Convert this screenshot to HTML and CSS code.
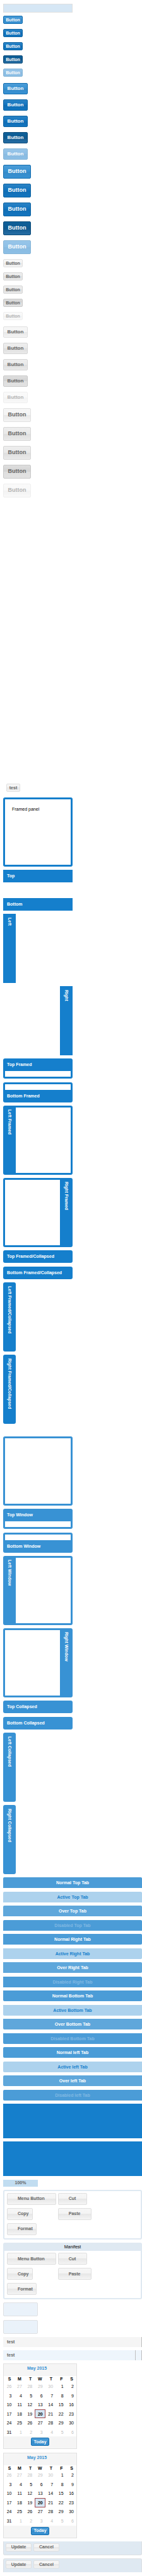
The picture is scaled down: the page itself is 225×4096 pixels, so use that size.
FILE: index.html
```html
<!DOCTYPE html>
<html lang="en">
<head>
<meta charset="utf-8">
<title>Theme components</title>
<link rel="stylesheet" href="styles.css">
</head>
<body>
<main class="page">
  <div class="toolbar"></div>

  <section class="buttons">
    <div class="button-group small">
      <button class="btn primary">Button</button>
      <button class="btn primary over">Button</button>
      <button class="btn primary over">Button</button>
      <button class="btn primary pressed">Button</button>
      <button class="btn primary" disabled>Button</button>
    </div>
    <div class="button-group medium">
      <button class="btn primary">Button</button>
      <button class="btn primary over">Button</button>
      <button class="btn primary over">Button</button>
      <button class="btn primary pressed">Button</button>
      <button class="btn primary" disabled>Button</button>
    </div>
    <div class="button-group large">
      <button class="btn primary">Button</button>
      <button class="btn primary over">Button</button>
      <button class="btn primary over">Button</button>
      <button class="btn primary pressed">Button</button>
      <button class="btn primary" disabled>Button</button>
    </div>
    <div class="button-group small">
      <button class="btn">Button</button>
      <button class="btn over">Button</button>
      <button class="btn over">Button</button>
      <button class="btn pressed">Button</button>
      <button class="btn" disabled>Button</button>
    </div>
    <div class="button-group medium">
      <button class="btn">Button</button>
      <button class="btn over">Button</button>
      <button class="btn over">Button</button>
      <button class="btn pressed">Button</button>
      <button class="btn" disabled>Button</button>
    </div>
    <div class="button-group large">
      <button class="btn">Button</button>
      <button class="btn over">Button</button>
      <button class="btn over">Button</button>
      <button class="btn pressed">Button</button>
      <button class="btn" disabled>Button</button>
    </div>
  </section>

  <div class="test-row"><button class="btn test-btn">test</button></div>

  <section class="panels">
    <div class="panel framed"><div class="body padded">Framed panel</div></div>
    <div class="panel top open"><h2 class="head">Top</h2></div>
    <div class="panel bottom"><h2 class="head">Bottom</h2></div>
    <div class="panel side left"><h2 class="head">Left</h2></div>
    <div class="panel side right"><h2 class="head">Right</h2></div>
    <div class="panel framed top"><h2 class="head">Top Framed</h2><div class="body"></div></div>
    <div class="panel framed bottom"><div class="body"></div><h2 class="head">Bottom Framed</h2></div>
    <div class="panel framed side left"><h2 class="head">Left Framed</h2><div class="body"></div></div>
    <div class="panel framed side right"><div class="body"></div><h2 class="head">Right Framed</h2></div>
    <div class="panel collapsed"><h2 class="head">Top Framed/Collapsed</h2></div>
    <div class="panel collapsed"><h2 class="head">Bottom Framed/Collapsed</h2></div>
    <div class="panel collapsed side left"><h2 class="head">Left Framed/Collapsed</h2></div>
    <div class="panel collapsed side left"><h2 class="head">Right Framed/Collapsed</h2></div>
  </section>

  <section class="panels windows">
    <div class="panel framed"><div class="body"></div></div>
    <div class="panel framed top"><h2 class="head">Top Window</h2><div class="body"></div></div>
    <div class="panel framed bottom"><div class="body"></div><h2 class="head">Bottom Window</h2></div>
    <div class="panel framed side left"><h2 class="head">Left Window</h2><div class="body"></div></div>
    <div class="panel framed side right"><div class="body"></div><h2 class="head">Right Window</h2></div>
    <div class="panel collapsed"><h2 class="head">Top Collapsed</h2></div>
    <div class="panel collapsed"><h2 class="head">Bottom Collapsed</h2></div>
    <div class="panel collapsed side left"><h2 class="head">Left Collapsed</h2></div>
    <div class="panel collapsed side left"><h2 class="head">Right Collapsed</h2></div>
  </section>

  <section class="tabs">
    <button class="tab t">Normal Top Tab</button>
    <button class="tab t active">Active Top Tab</button>
    <button class="tab t hover">Over Top Tab</button>
    <button class="tab t" disabled>Disabled Top Tab</button>
    <button class="tab r">Normal Right Tab</button>
    <button class="tab r active">Active Right Tab</button>
    <button class="tab r hover">Over Right Tab</button>
    <button class="tab r" disabled>Disabled Right Tab</button>
    <button class="tab b">Normal Bottom Tab</button>
    <button class="tab b active">Active Bottom Tab</button>
    <button class="tab b hover">Over Bottom Tab</button>
    <button class="tab b" disabled>Disabled Bottom Tab</button>
    <button class="tab l">Normal left Tab</button>
    <button class="tab l active">Active left Tab</button>
    <button class="tab l hover">Over left Tab</button>
    <button class="tab l" disabled>Disabled left Tab</button>
  </section>

  <section class="widgets">
    <div class="block"></div>
    <div class="block"></div>
    <div class="progress">100%</div>

    <div class="menu-group">
      <div class="menu-items">
        <button class="btn menu split">Menu Button</button>
        <button class="btn menu split">Cut</button>
        <button class="btn menu">Copy</button>
        <button class="btn menu split">Paste</button>
        <button class="btn menu">Format</button>
      </div>
    </div>
    <div class="menu-group titled">
      <h2 class="menu-title">Manifest</h2>
      <div class="menu-items">
        <button class="btn menu split">Menu Button</button>
        <button class="btn menu split">Cut</button>
        <button class="btn menu">Copy</button>
        <button class="btn menu split">Paste</button>
        <button class="btn menu">Format</button>
      </div>
    </div>

    <div class="tip"></div>
    <div class="tip"></div>
    <div class="column-head">test</div>
    <div class="column-head sorted"><span>test</span><span class="trigger"></span></div>

    <div class="calendar">
      <h2 class="month">May 2015</h2>
      <table class="days">
        <thead><tr><th>S</th><th>M</th><th>T</th><th>W</th><th>T</th><th>F</th><th>S</th></tr></thead>
        <tbody>
          <tr><td class="out">26</td><td class="out">27</td><td class="out">28</td><td class="out">29</td><td class="out">30</td><td>1</td><td>2</td></tr>
          <tr><td>3</td><td>4</td><td>5</td><td>6</td><td>7</td><td>8</td><td>9</td></tr>
          <tr><td>10</td><td>11</td><td>12</td><td>13</td><td>14</td><td>15</td><td>16</td></tr>
          <tr><td>17</td><td>18</td><td>19</td><td class="selected">20</td><td>21</td><td>22</td><td>23</td></tr>
          <tr><td>24</td><td>25</td><td>26</td><td>27</td><td>28</td><td>29</td><td>30</td></tr>
          <tr><td>31</td><td class="out">1</td><td class="out">2</td><td class="out">3</td><td class="out">4</td><td class="out">5</td><td class="out">6</td></tr>
        </tbody>
      </table>
      <div class="cal-foot"><button class="btn primary">Today</button></div>
    </div>
    <div class="calendar">
      <h2 class="month">May 2015</h2>
      <table class="days">
        <thead><tr><th>S</th><th>M</th><th>T</th><th>W</th><th>T</th><th>F</th><th>S</th></tr></thead>
        <tbody>
          <tr><td class="out">26</td><td class="out">27</td><td class="out">28</td><td class="out">29</td><td class="out">30</td><td>1</td><td>2</td></tr>
          <tr><td>3</td><td>4</td><td>5</td><td>6</td><td>7</td><td>8</td><td>9</td></tr>
          <tr><td>10</td><td>11</td><td>12</td><td>13</td><td>14</td><td>15</td><td>16</td></tr>
          <tr><td>17</td><td>18</td><td>19</td><td class="selected">20</td><td>21</td><td>22</td><td>23</td></tr>
          <tr><td>24</td><td>25</td><td>26</td><td>27</td><td>28</td><td>29</td><td>30</td></tr>
          <tr><td>31</td><td class="out">1</td><td class="out">2</td><td class="out">3</td><td class="out">4</td><td class="out">5</td><td class="out">6</td></tr>
        </tbody>
      </table>
      <div class="cal-foot"><button class="btn primary">Today</button></div>
    </div>

    <div class="editor-bar below"><button class="btn">Update</button><button class="btn">Cancel</button></div>
    <div class="editor-bar above"><button class="btn">Update</button><button class="btn">Cancel</button></div>
  </section>
</main>
</body>
</html>
```
FILE: styles.css
```css
* { box-sizing: border-box; }

body {
  margin: 0;
  background: #fff;
  color: #000;
  font: 7px/9px "Liberation Sans", Arial, sans-serif;
}

h2 { margin: 0; font: inherit; }

.page {
  display: flex;
  flex-direction: column;
  gap: 5px;
  padding: 6px 0 6px 5px;
}

.toolbar {
  width: 110px;
  height: 14px;
  border: 1px solid #dfdfdf;
  background: #d6e7f5;
}

/* Buttons */
.btn {
  height: 13px;
  margin: 0;
  padding: 0 0 1px;
  border: 1px solid #e0e0e0;
  border-radius: 2px;
  background: linear-gradient(#f6f6f6, #f4f4f4 49%, #e7e7e7 50%, #f4f4f4);
  color: #666;
  font: bold 7px/9px "Liberation Sans", Arial, sans-serif;
}
.btn.over {
  border-color: #d6d6d6;
  background: linear-gradient(#eee, #e9e9e9 49%, #dedede 50%, #eaeaea);
}
.btn.pressed {
  border-color: #c9c9c9;
  background: linear-gradient(#dedede, #d2d2d2 49%, #dfdfdf 50%, #e2e2e2);
}
.btn.primary {
  border-color: #126daf;
  background: linear-gradient(#4b9cd7, #3892d3 49%, #358ac8 50%, #3892d4);
  color: #fff;
}
.btn.primary.over {
  border-color: #1064a1;
  background: linear-gradient(#2a83c5, #1274bf 49%, #116db3 50%, #1275c0);
}
.btn.primary.pressed {
  border-color: #0b4a78;
  background: linear-gradient(#0f6099, #0e5a90 49%, #11598e 50%, #266ea5);
}
.btn:disabled { opacity: 0.5; }
.btn.primary:disabled {
  border-color: #88b6d7;
  background: linear-gradient(#97c5e9, #8fc0e6 49%, #8abbe0 50%, #8cbfe6);
  opacity: 1;
}

.buttons {
  display: flex;
  flex-direction: column;
  gap: 8px;
  margin-bottom: 450px;
}
.button-group {
  display: flex;
  flex-direction: column;
  align-items: flex-start;
  gap: 8px;
}
.small { margin-bottom: 2px; }
.small .btn { width: 31px; }
.medium .btn { width: 39px; height: 18px; font-size: 8px; }
.large .btn { width: 44px; height: 22px; font-size: 9px; }

.test-row { display: flex; padding: 0 0 4px 5px; }
.test-btn { width: 22px; }

/* Panels */
.panels {
  --frame: #157fcc;
  display: flex;
  flex-direction: column;
  justify-content: space-between;
  gap: 5px;
  width: 110px;
  min-height: 996px;
}
.windows {
  --frame: #3892d4;
  min-height: 696px;
  margin-top: 15px;
}
.panel { display: flex; flex-direction: column; }
.head {
  height: 20px;
  padding: 5px 6px;
  background: var(--frame);
  color: #fff;
  font-weight: bold;
}
.open { padding-bottom: 19px; }
.body { flex: 1; min-height: 9px; background: #fff; }
.padded { padding: 11px; }
.framed {
  min-height: 110px;
  padding: 3px;
  border-radius: 3px;
  background: var(--frame);
}
.framed.top { min-height: 0; padding-top: 0; }
.framed.bottom { min-height: 0; padding-bottom: 0; }
.framed .head, .collapsed .head { background: none; }
.framed .head { padding: 5px 3px; }
.collapsed { border-radius: 3px; background: var(--frame); }
.side { flex-direction: row; min-height: 110px; }
.side .head {
  width: 20px;
  height: auto;
  padding: 6px 5px;
  writing-mode: vertical-rl;
  white-space: nowrap;
}
.side.right { justify-content: flex-end; }
.framed.side .head { padding: 3px 5px; }
.framed.side.left { padding-left: 0; }
.framed.side.right { padding-right: 0; }
.collapsed.side { align-self: flex-start; }

/* Tabs */
.tabs {
  display: flex;
  flex-direction: column;
  justify-content: space-between;
  min-height: 355px;
}
.tab {
  height: 17px;
  margin: 0;
  padding: 0;
  border: 0;
  background: #4b9cd7;
  color: #fff;
  font: bold 7px/9px "Liberation Sans", Arial, sans-serif;
}
.tab.active { background: #add2ed; color: #157fcc; }
.tab.hover { background: #5fa7db; }
.tab:disabled { color: #81b9e3; }
.t { border-radius: 2px 2px 0 0; }
.r { border-radius: 0 2px 2px 0; }
.b { border-radius: 0 0 2px 2px; }
.l { border-radius: 2px 0 0 2px; }

/* Widgets */
.widgets {
  display: flex;
  flex-direction: column;
  justify-content: space-between;
  min-height: 745px;
}
.block { height: 55px; background: #157fcc; }
.progress {
  width: 55px;
  height: 11px;
  background: #c1ddf1;
  color: #666;
  font-weight: bold;
  text-align: center;
}

.menu-group {
  padding: 3px 4px 5px;
  border: 2px solid #dfe9f2;
  border-radius: 3px;
}
.menu-group.titled { padding: 0; border-top: 0; }
.titled .menu-items { padding: 3px 4px 5px; }
.menu-title {
  height: 13px;
  padding: 2px;
  background: #dfe9f2;
  text-align: center;
}
.menu-items {
  display: grid;
  grid-template-columns: max-content max-content;
  justify-items: start;
  gap: 5px 3px;
}
.menu {
  height: 19px;
  padding: 0 5px 1px 16px;
}
.menu.split { padding-right: 17px; }

.tip {
  width: 55px;
  height: 22px;
  border: 1px solid #dfe1e4;
  border-radius: 2px;
  background: #eaf2fa;
}

.column-head {
  display: flex;
  justify-content: space-between;
  height: 16px;
  padding-left: 6px;
  border-right: 1px solid #c0c0c0;
  background: #f5f5f5;
  color: #666;
  font-weight: bold;
  line-height: 15px;
}
.column-head.sorted { background: #eef5fc; }
.trigger { width: 10px; border-left: 1px solid #c0c0c0; }

.calendar {
  width: 117px;
  border: 1px solid #e1e1e1;
  background: #f5f5f5;
}
.month {
  height: 19px;
  padding: 2px 10px 2px 0;
  color: #3892d4;
  font-weight: bold;
  text-align: center;
}
.days {
  width: 100%;
  height: 96px;
  border-collapse: collapse;
  table-layout: fixed;
  background: #fff;
}
.days th, .days td { padding: 0 4px 0 0; text-align: right; }
.days th { padding-right: 5px; }
.days .out { color: #bfbfbf; }
.days .selected {
  background: #d6e7f5;
  outline: 1px solid #a34a50;
  outline-offset: -1px;
  font-weight: bold;
}
.cal-foot {
  display: flex;
  justify-content: center;
  height: 19px;
  padding-top: 2px;
}
.cal-foot .btn { width: 29px; }

.editor-bar {
  display: flex;
  gap: 3px;
  height: 22px;
  padding: 3px;
  border: 1px solid #dcdfe3;
  background: #dfe9f2;
}
.editor-bar .btn { width: 41px; }
.below { border-top: 0; border-radius: 0 0 3px 3px; }
.above { padding-top: 2px; border-bottom: 0; border-radius: 3px 3px 0 0; }
```
